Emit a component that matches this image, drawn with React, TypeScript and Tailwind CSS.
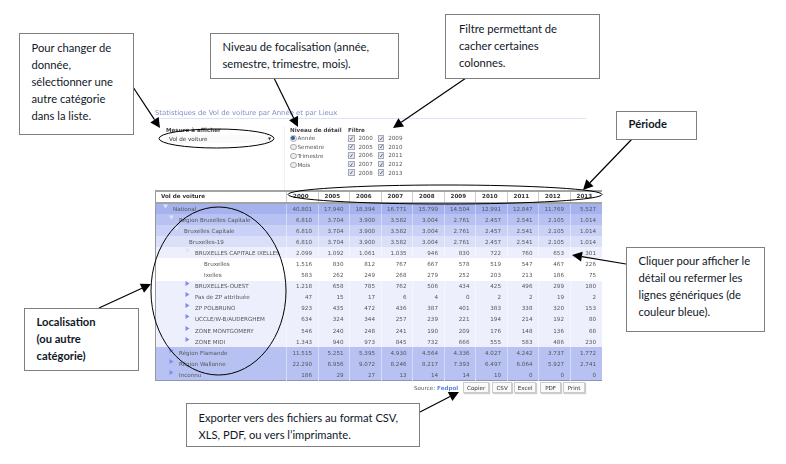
const years = ["2000", "2005", "2006", "2007", "2008", "2009", "2010", "2011", "2012", "2013"];

type Row = {
  name: string;
  pad: string;
  bg: string;
  icon?: "open" | "closed";
  values: string[];
};

const brussels = ["6.810", "3.704", "3.900", "3.582", "3.004", "2.761", "2.457", "2.541", "2.105", "1.014"];

const rows: Row[] = [
  { name: "National", pad: "pl-[17px]", bg: "bg-[#a5b2ee]", icon: "open", values: ["40.801", "17.940", "18.394", "16.771", "15.799", "14.504", "12.991", "12.847", "11.769", "5.527"] },
  { name: "Région Bruxelles Capitale", pad: "pl-[23px]", bg: "bg-[#b7c2f2]", icon: "open", values: brussels },
  { name: "Bruxelles Capitale", pad: "pl-[28px]", bg: "bg-[#c9d2f6]", icon: "open", values: brussels },
  { name: "Bruxelles-19", pad: "pl-[33px]", bg: "bg-[#dbe0f9]", icon: "open", values: brussels },
  { name: "BRUXELLES CAPITALE IXELLES", pad: "pl-[39px]", bg: "bg-[#edf0fc]", icon: "open", values: ["2.099", "1.092", "1.061", "1.035", "946", "830", "722", "760", "653", "301"] },
  { name: "Bruxelles", pad: "pl-[48px]", bg: "bg-white", values: ["1.516", "830", "812", "767", "667", "578", "519", "547", "467", "226"] },
  { name: "Ixelles", pad: "pl-[48px]", bg: "bg-white", values: ["583", "262", "249", "268", "279", "252", "203", "213", "186", "75"] },
  { name: "BRUXELLES-OUEST", pad: "pl-[39px]", bg: "bg-[#edf0fc]", icon: "closed", values: ["1.218", "658", "785", "762", "506", "434", "425", "496", "299", "180"] },
  { name: "Pas de ZP attribuée", pad: "pl-[39px]", bg: "bg-[#edf0fc]", icon: "closed", values: ["47", "15", "17", "6", "4", "0", "2", "2", "19", "2"] },
  { name: "ZP POLBRUNO", pad: "pl-[39px]", bg: "bg-[#edf0fc]", icon: "closed", values: ["923", "435", "472", "436", "387", "401", "383", "338", "320", "153"] },
  { name: "UCCLE/W-B/AUDERGHEM", pad: "pl-[39px]", bg: "bg-[#edf0fc]", icon: "closed", values: ["634", "324", "344", "257", "239", "221", "194", "214", "192", "80"] },
  { name: "ZONE MONTGOMERY", pad: "pl-[39px]", bg: "bg-[#edf0fc]", icon: "closed", values: ["546", "240", "248", "241", "190", "209", "176", "148", "136", "68"] },
  { name: "ZONE MIDI", pad: "pl-[39px]", bg: "bg-[#edf0fc]", icon: "closed", values: ["1.343", "940", "973", "845", "732", "666", "555", "583", "486", "230"] },
  { name: "Région Flamande", pad: "pl-[23px]", bg: "bg-[#b7c2f2]", icon: "closed", values: ["11.515", "5.251", "5.395", "4.930", "4.564", "4.336", "4.027", "4.242", "3.737", "1.772"] },
  { name: "Région Wallonne", pad: "pl-[23px]", bg: "bg-[#b7c2f2]", icon: "closed", values: ["22.290", "8.956", "9.072", "8.246", "8.217", "7.393", "6.497", "6.064", "5.927", "2.741"] },
  { name: "Inconnu", pad: "pl-[23px]", bg: "bg-[#b7c2f2]", icon: "closed", values: ["186", "29", "27", "13", "14", "14", "10", "0", "0", "0"] },
];

const Toggle = ({ kind }: { kind: "open" | "closed" }) =>
  kind === "open" ? (
    <svg width="5" height="5" viewBox="0 0 5 5" className="absolute -ml-[10px] -mt-[1px]">
      <path d="M0 0.5H5L2.5 4.5Z" fill="#dfe3f7" />
    </svg>
  ) : (
    <svg width="5" height="5" viewBox="0 0 5 5" className="absolute -ml-[10px] -mt-[1px]">
      <path d="M0.5 0V5L4.5 2.5Z" fill="#7e8df0" />
    </svg>
  );

const Radio = ({ on }: { on?: boolean }) => (
  <span className="flex h-[6.5px] w-[6.5px] items-center justify-center rounded-full border border-[#aaa] bg-[#eee]">
    {on && <span className="h-[4px] w-[4px] rounded-full bg-[#2d5f96]" />}
  </span>
);

const Check = ({ year }: { year: string }) => (
  <div className="flex h-[8.6px] items-center gap-[4px]">
    <span className="flex h-[6.5px] w-[6.5px] items-center justify-center border border-[#aaa] bg-[#e4e8f2]">
      <svg width="5" height="5" viewBox="0 0 5 5">
        <path d="M1 2.8L2 4L4 0.6" fill="none" stroke="#3345b5" strokeWidth="0.8" />
      </svg>
    </span>
    <span>{year}</span>
  </div>
);

const exportButtons = [
  { label: "Copier", w: "w-[26px]", ml: "ml-[6px]" },
  { label: "CSV", w: "w-[20px]", ml: "ml-[3px]" },
  { label: "Excel", w: "w-[22px]", ml: "ml-[2px]" },
  { label: "PDF", w: "w-[21px]", ml: "ml-[4px]" },
  { label: "Print", w: "w-[22px]", ml: "ml-[2px]" },
];

const Callout = ({ className, lines, bold }: { className: string; lines: string[]; bold?: boolean }) => (
  <div className={`absolute border border-[#7f7f7f] bg-white pl-[11.5px] font-['Lato',sans-serif] text-[11.2px] leading-[16.9px] text-[#101828] ${bold ? "font-bold" : ""} ${className}`}>
    {lines.map((line) => (
      <div key={line}>{line}</div>
    ))}
  </div>
);

const Arrow = ({ x1, y1, x2, y2 }: { x1: number; y1: number; x2: number; y2: number }) => {
  const a = Math.atan2(y2 - y1, x2 - x1);
  const len = 10;
  const wing = 0.5;
  const bx = x2 - len * Math.cos(a);
  const by = y2 - len * Math.sin(a);
  const ox = len * wing * Math.sin(a);
  const oy = len * wing * Math.cos(a);
  return (
    <g>
      <line x1={x1} y1={y1} x2={bx} y2={by} stroke="#000" strokeWidth="1.2" />
      <polygon points={`${x2},${y2} ${bx + ox},${by - oy} ${bx - ox},${by + oy}`} fill="#000" />
    </g>
  );
};

export default function App() {
  return (
    <div className="relative h-[464px] w-[786px] overflow-hidden bg-white">
      {/* the application screenshot */}
      <div className="ml-[155px] w-[446px] pt-[110px] font-['DejaVu_Sans',sans-serif] text-[5.6px] leading-[8px] text-[#555] blur-[0.35px]">
        <div className="w-[431px] border-b border-[#dde3f6] pb-[1px] text-[6.9px] leading-[7px] text-[#7f8fc4]">
          Statistiques de Vol de voiture par Année et par Lieux
        </div>

        <div className="flex h-[71px] pt-[7px]">
          <div className="ml-[11px] w-[118px]">
            <div className="font-bold text-[#444]">Mesure à afficher</div>
            <div className="mt-[1px] flex h-[8px] w-[107px] items-center justify-between bg-[#fafafa] pl-[3px] pr-[2px] text-[#333]">
              <span>Vol de voiture</span>
              <span className="text-[4px]">▼</span>
            </div>
          </div>
          <div className="w-[64px] border-l border-[#f0f0f0] pl-[5px]">
            <div className="font-bold text-[#444]">Niveau de détail</div>
            {["Année", "Semestre", "Trimestre", "Mois"].map((label, i) => (
              <div key={label} className="flex h-[8.8px] items-center gap-[1px]">
                <Radio on={i === 0} />
                <span>{label}</span>
              </div>
            ))}
          </div>
          <div>
            <div className="font-bold text-[#444]">Filtre</div>
            <div className="flex gap-[5px]">
              <div>
                {years.slice(0, 5).map((y) => (
                  <Check key={y} year={y} />
                ))}
              </div>
              <div>
                {years.slice(5).map((y) => (
                  <Check key={y} year={y} />
                ))}
              </div>
            </div>
          </div>
        </div>

        <table className="w-[446px] table-fixed border-collapse border-l border-[#999]">
          <colgroup>
            <col className="w-[131px]" />
            {years.map((y) => (
              <col key={y} className="w-[31.5px]" />
            ))}
          </colgroup>
          <thead>
            <tr className="h-[12px] border-y-2 border-[#a3a3a3] bg-white font-bold text-[#333]">
              <th className="pb-[2px] pl-[5px] text-left font-bold">Vol de voiture</th>
              {years.map((y) => (
                <th key={y} className="border-l border-[#ccc] pb-[2px] pl-[6px] text-left font-bold">
                  {y}
                </th>
              ))}
            </tr>
          </thead>
          <tbody className="border-b border-[#8c96b8]">
            {rows.map((row) => (
              <tr key={row.name} className={`h-[11.1px] ${row.bg}`}>
                <td className={`whitespace-nowrap p-0 ${row.pad}`}>
                  {row.icon && <Toggle kind={row.icon} />}
                  {row.name}
                </td>
                {row.values.map((v, i) => (
                  <td key={i} className="border-l border-white/40 p-0 pr-[5.5px] text-right">
                    {v}
                  </td>
                ))}
              </tr>
            ))}
          </tbody>
        </table>

        <div className="mt-[1px] flex items-center">
          <span className="ml-[259px]">Source:</span>
          <span className="ml-[2px] w-[20px] font-bold text-[#5b86e0]">Fedpol</span>
          {exportButtons.map((b) => (
            <span
              key={b.label}
              className={`flex h-[11px] items-center justify-center border border-[#ccc] bg-[#fafafa] text-[#333] shadow-[1px_1px_1px_#ccc] ${b.w} ${b.ml}`}
            >
              {b.label}
            </span>
          ))}
        </div>
      </div>

      {/* annotations over the screenshot */}
      <svg width="786" height="464" className="absolute left-0 top-0">
        <ellipse cx="216.5" cy="138.5" rx="57.5" ry="9.5" fill="none" stroke="#000" strokeWidth="1" />
        <ellipse cx="445" cy="194.5" rx="157" ry="9.5" fill="none" stroke="#000" strokeWidth="1" />
        <ellipse cx="218.5" cy="291" rx="67.5" ry="84" fill="none" stroke="#000" strokeWidth="1" />
        <Arrow x1={133} y1={87} x2={160} y2={128} />
        <Arrow x1={274} y1={78} x2={298} y2={127} />
        <Arrow x1={466} y1={78} x2={393} y2={128} />
        <Arrow x1={632} y1={139} x2={583} y2={190} />
        <Arrow x1={626} y1={264} x2={572} y2={255} />
        <Arrow x1={99} y1={308} x2={151} y2={284} />
        <Arrow x1={420} y1={412} x2={459} y2={392} />
      </svg>

      <Callout className="left-[19px] top-[33px] h-[102px] w-[115px] pt-[6px]" lines={["Pour changer de", "donnée,", "sélectionner une", "autre catégorie", "dans la liste."]} />
      <Callout className="left-[210px] top-[33px] h-[46px] w-[189px] pt-[5px]" lines={["Niveau de focalisation (année,", "semestre, trimestre, mois)."]} />
      <Callout className="left-[445px] top-[14px] h-[65px] w-[155px] pl-[13px] pt-[6px]" lines={["Filtre permettant de", "cacher certaines", "colonnes."]} />
      <Callout bold className="left-[616px] top-[111px] h-[29px] w-[81px] pt-[4px]" lines={["Période"]} />
      <Callout className="left-[626px] top-[247px] h-[85px] w-[139px] pt-[5px]" lines={["Cliquer pour afficher le", "détail ou refermer les", "lignes génériques (de", "couleur bleue)."]} />
      <Callout bold className="left-[24px] top-[308px] h-[63px] w-[115px] pt-[5px]" lines={["Localisation", "(ou autre", "catégorie)"]} />
      <Callout className="left-[186px] top-[403px] h-[44px] w-[234px] pt-[6px]" lines={["Exporter vers des fichiers au format CSV,", "XLS, PDF, ou vers l’imprimante."]} />
    </div>
  );
}
